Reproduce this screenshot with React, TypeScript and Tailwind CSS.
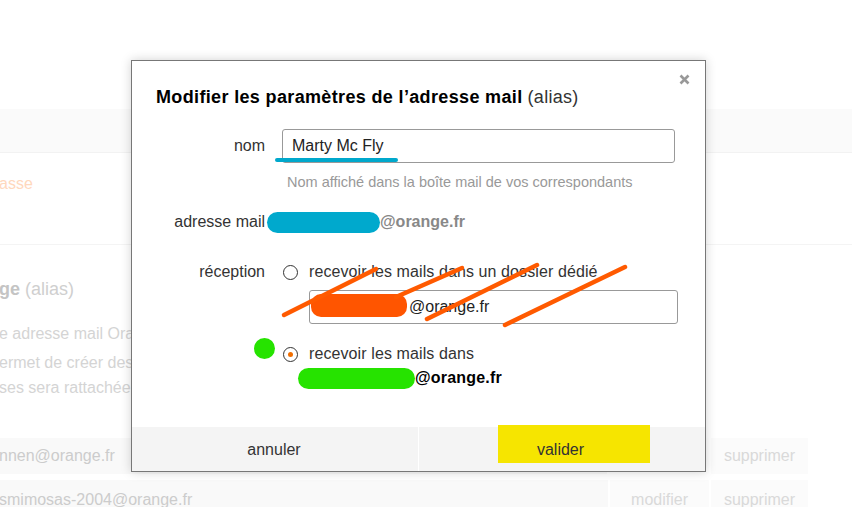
import React from "react";

export default function App() {
  return (
    <div
      className="relative w-[852px] h-[507px] overflow-hidden bg-white"
      style={{ fontFamily: '"Liberation Sans", Arial, sans-serif' }}
    >
      {/* Background page (faded) */}
      <div className="flex flex-col">
        <div className="h-[109px]" />
        <div className="h-[44px] bg-[#fafafa] border-b border-[#f2f2f2]" />
        <div className="mt-[21px] text-[16px] leading-[20px] text-[#ffd8bd] -ml-[1px]">asse</div>
        <div className="mt-[50px] h-px bg-[#f4f4f4]" />
        <div className="mt-[33px] text-[18px] leading-[22px] text-[#cfcfcf] whitespace-nowrap -ml-[1px]">
          <span className="font-bold text-[#c4c4c4]">ge</span> (alias)
        </div>
        <div className="mt-[24px] text-[16px] leading-[20px] text-[#d4d4d4] whitespace-nowrap -ml-[1px]">
          e adresse mail Orange
        </div>
        <div className="mt-[6px] text-[16px] leading-[25px] text-[#d4d4d4] whitespace-nowrap -ml-[1px]">
          <div>ermet de créer des adresses</div>
          <div>ses sera rattachée à votre</div>
        </div>
        <div className="mt-[38px] flex gap-[2px] h-[36px] w-[808px]">
          <div className="flex-1 bg-[#f9f9f9] flex items-center text-[16px] text-[#cccccc] whitespace-nowrap -ml-[1px]">
            nnen@orange.fr
          </div>
          <div className="w-[100px] bg-[#fefefe]" />
          <div className="w-[97px] bg-[#fbfbfb] flex items-center justify-center text-[16px] text-[#d9d9d9]">
            supprimer
          </div>
        </div>
        <div className="mt-[6px] flex gap-[2px] h-[36px] w-[808px]">
          <div className="flex-1 bg-[#f9f9f9] flex items-start pt-[8px] text-[16px] text-[#cccccc] whitespace-nowrap -ml-[1px]">
            smimosas-2004@orange.fr
          </div>
          <div className="w-[99px] bg-[#fbfbfb] flex items-start pt-[8px] justify-center text-[16px] text-[#d9d9d9]">
            modifier
          </div>
          <div className="w-[97px] bg-[#fbfbfb] flex items-start pt-[8px] justify-center text-[16px] text-[#d9d9d9]">
            supprimer
          </div>
        </div>
      </div>

      {/* Modal dialog */}
      <div className="absolute left-[131px] top-[60px] w-[575px] h-[412px] bg-white border border-[#777] shadow-[0_0_10px_rgba(0,0,0,0.18)] flex flex-col">
        {/* close */}
        <div className="absolute right-[15px] top-[13px] w-[11px] h-[11px]">
          <svg width="11" height="11" viewBox="0 0 11 11">
            <path d="M1.5 1.5 L9.5 9.5 M9.5 1.5 L1.5 9.5" stroke="#999" strokeWidth="2.6" strokeLinecap="butt" />
          </svg>
        </div>

        <div className="pt-[25px] pl-[24px] text-[18px] leading-[22px] text-black whitespace-nowrap">
          <span className="font-bold tracking-[0.35px]">Modifier les paramètres de l’adresse mail</span>{" "}
          <span className="text-[#333] tracking-[0.3px]">(alias)</span>
        </div>

        {/* nom */}
        <div className="mt-[21px] flex items-center">
          <div className="w-[133px] text-right text-[16px] text-[#333]">nom</div>
          <div className="ml-[17px] relative w-[393px] h-[34px] border border-[#999] rounded-[3px] flex items-center pl-[9px] text-[16px] text-[#222]">
            Marty Mc Fly
            <div className="absolute left-[-8px] top-[28px] w-[123px] h-[4px] rounded-full bg-[#00a8cc]" />
          </div>
        </div>
        <div className="mt-[10px] ml-[155px] text-[14.5px] leading-[18px] text-[#999] whitespace-nowrap">
          Nom affiché dans la boîte mail de vos correspondants
        </div>

        {/* adresse mail */}
        <div className="mt-[20px] flex items-center h-[22px]">
          <div className="w-[133px] text-right text-[16px] text-[#333] whitespace-nowrap">adresse mail</div>
          <div className="ml-[2px] w-[113px] h-[21px] rounded-full bg-[#00a9cd]" />
          <div className="text-[16px] font-bold text-[#888]">@orange.fr</div>
        </div>

        {/* réception */}
        <div className="mt-[28px] flex items-center h-[22px]">
          <div className="w-[133px] text-right text-[16px] text-[#333]">réception</div>
          <div className="ml-[18px] w-[15px] h-[15px] rounded-full border border-[#333] bg-white" />
          <div className="ml-[11px] text-[16px] text-[#333] whitespace-nowrap tracking-[0.1px]">
            recevoir les mails dans un dossier dédié
          </div>
        </div>
        <div className="mt-[7px] ml-[177px] relative w-[369px] h-[34px] border border-[#999] rounded-[3px] flex items-center pl-[99px] text-[16px] text-[#222]">
          @orange.fr
          <div className="absolute left-[1px] top-[3px] w-[96px] h-[23px] rounded-[10px] bg-[#ff5500]" />
        </div>

        <div className="mt-[19px] flex items-center h-[22px]">
          <div className="ml-[151px] w-[15px] h-[15px] rounded-full border border-[#333] bg-white flex items-center justify-center">
            <div className="w-[5px] h-[5px] rounded-full bg-[#f16e00]" />
          </div>
          <div className="ml-[11px] text-[16px] text-[#333] whitespace-nowrap tracking-[0.1px]">recevoir les mails dans</div>
        </div>
        <div className="mt-[2px] flex items-center h-[22px]">
          <div className="ml-[166px] w-[117px] h-[21px] rounded-full bg-[#26e300]" />
          <div className="text-[16px] font-bold text-black tracking-[0.2px]">@orange.fr</div>
        </div>

        {/* footer */}
        <div className="mt-auto h-[44px] bg-[#f4f4f4] flex text-[16px] text-[#333]">
          <div className="w-[286px] flex items-center justify-center pt-[1px] pr-[2px]">annuler</div>
          <div className="w-px bg-white" />
          <div className="flex-1 flex items-center justify-center relative pt-[1px] pr-[3px]">
            <div className="absolute left-[79px] top-[-2px] w-[152px] h-[38px] bg-[#f6e500]" />
            <span className="relative">valider</span>
          </div>
        </div>

        {/* annotations: strike lines and green dot */}
        <svg
          className="absolute left-0 top-0 pointer-events-none"
          width="575"
          height="412"
          viewBox="0 0 575 412"
        >
          <g stroke="#ff5a00" strokeWidth="4.5" strokeLinecap="round">
            <line x1="152" y1="254" x2="244" y2="208" />
            <line x1="264" y1="236" x2="330" y2="207" />
            <line x1="295" y1="258" x2="405" y2="204" />
            <line x1="373" y1="264" x2="493" y2="206" />
          </g>
        </svg>
        <div className="absolute left-[122px] top-[277px] w-[21px] h-[21px] rounded-full bg-[#26e300]" />
      </div>
    </div>
  );
}
